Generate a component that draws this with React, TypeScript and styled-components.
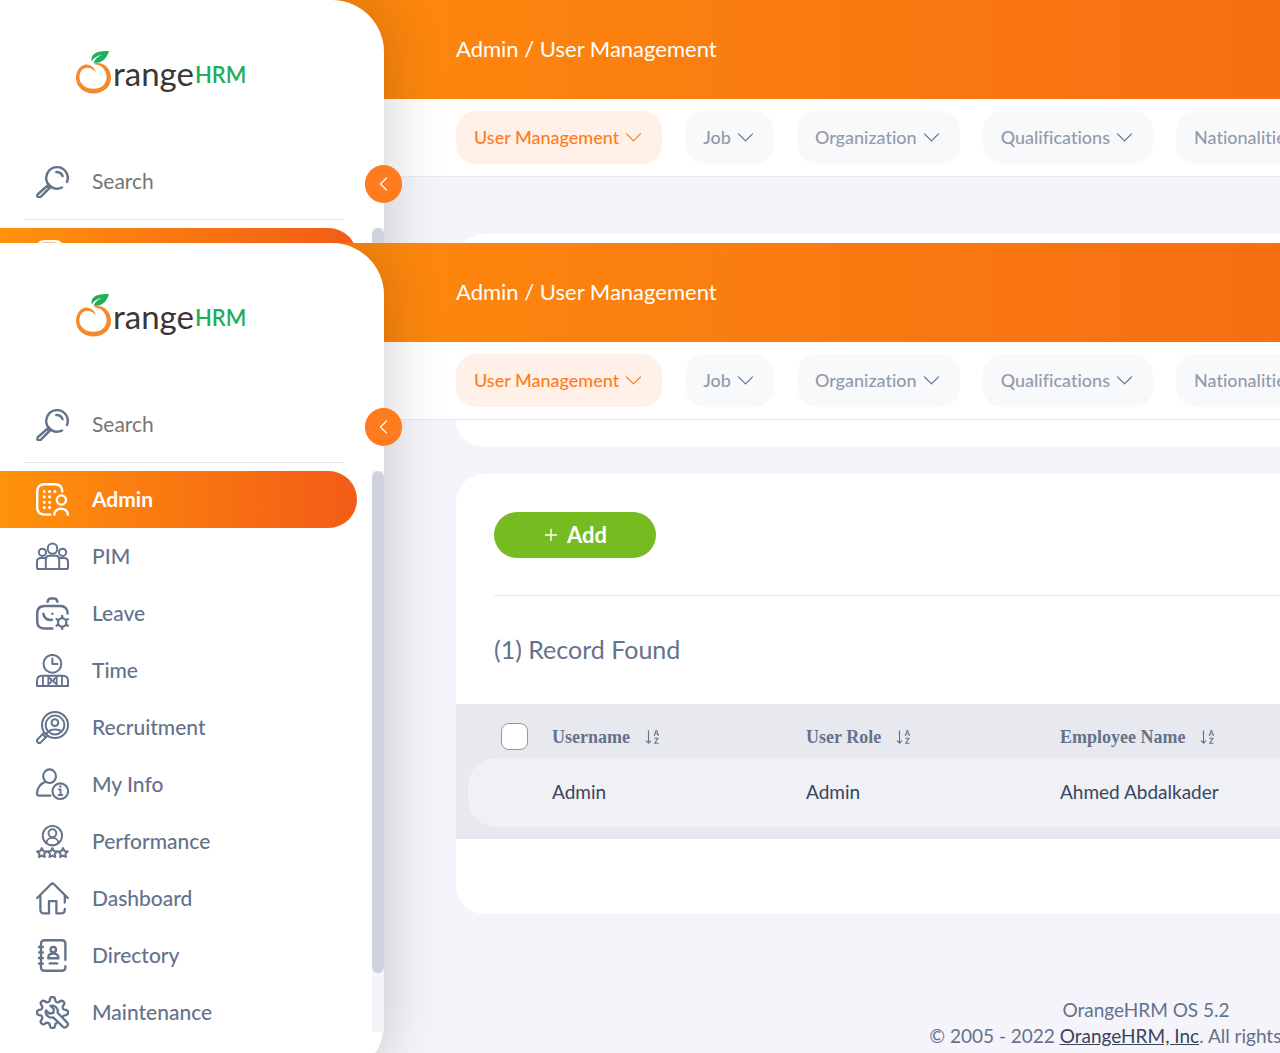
import React, { useId } from "react";
import styled, { createGlobalStyle } from "styled-components";
import { BsSortAlphaDown } from "react-icons/bs";

const sans = `Lato, "Open Sans", sans-serif`;
const color = {
  orange: "#ff7b1d",
  slate: "#64728c",
  ink: "#38455d",
  line: "#e8e9ee",
  canvas: "#f5f4fa",
};

const GlobalStyle = createGlobalStyle`
  *, *::before, *::after { box-sizing: border-box; }
  body { margin: 0; font-family: ${sans}; font-variant-ligatures: no-common-ligatures; color: ${color.slate}; background: ${color.canvas}; overflow: hidden; }
  button, input { font-family: inherit; font-variant-ligatures: inherit; }
`;

const Page = styled.div`
  display: grid;
  grid-template-rows: 243px 1fr;
  height: 100vh;
`;

const Frame = styled.section`
  overflow: hidden;
  min-width: 0;
  min-height: 0;
`;

const Shell = styled.div`
  display: flex;
  min-width: 1908px;
  background: linear-gradient(90deg, #ff920b, #f35c17) 0 0 / 100% 99px no-repeat ${color.canvas};
`;

const Sidebar = styled.aside`
  position: relative;
  z-index: 1;
  flex: 0 0 384px;
  min-width: 0;
  display: flex;
  flex-direction: column;
  padding-bottom: 44px;
  background: #fff;
  border-radius: 0 52px 52px 0;
  box-shadow: 0 0 60px rgba(0, 0, 0, 0.2);
`;

const Brand = styled.a`
  display: flex;
  height: 144px;
  padding: 50px 0 0 75px;
  text-decoration: none;
`;

const BrandText = styled.span<{ $green?: boolean }>`
  margin-top: ${(p) => (p.$green ? 11 : 3)}px;
  padding-left: 1px;
  font-size: ${(p) => (p.$green ? 22 : 33)}px;
  line-height: ${(p) => (p.$green ? 28 : 40)}px;
  font-weight: ${(p) => (p.$green ? 600 : 400)};
  color: ${(p) => (p.$green ? "#1fae5b" : "#3b3638")};
`;

const SearchRow = styled.label`
  display: flex;
  align-items: center;
  gap: 23px;
  height: 76px;
  margin: 0 40px 8px 24px;
  padding-left: 12px;
  border-bottom: 1px solid ${color.line};
`;

const SearchInput = styled.input`
  flex: 1;
  width: 0;
  min-width: 0;
  padding: 0 0 2px;
  border: 0;
  outline: 0;
  background: transparent;
  font-size: 21px;
  line-height: 28px;
  color: ${color.slate};
  &::placeholder { color: #757575; opacity: 1; }
`;

const Collapse = styled.button`
  position: absolute;
  top: 165px;
  right: -18px;
  display: grid;
  place-items: center;
  width: 37px;
  height: 38px;
  padding: 0;
  border: 0;
  border-radius: 19px;
  background: ${color.orange};
  color: #fff;
`;

const MenuArea = styled.nav`
  display: flex;
  height: 561px;
  overflow: hidden;
`;

const MenuList = styled.ul`
  flex: 1;
  margin: 0;
  padding: 0 15px 0 0;
  list-style: none;
`;

const MenuLink = styled.a<{ $active?: boolean }>`
  display: flex;
  align-items: center;
  gap: 23px;
  height: 57px;
  padding-left: 36px;
  border-radius: 0 29px 29px 0;
  font-size: 21px;
  line-height: 28px;
  font-weight: ${(p) => (p.$active ? 700 : 500)};
  color: ${(p) => (p.$active ? "#fff" : color.slate)};
  background: ${(p) => (p.$active ? "linear-gradient(90deg, #ff920b, #f35c17)" : "none")};
  text-decoration: none;
`;

const MenuText = styled.span`
  padding-bottom: 2px;
`;

const ScrollTrack = styled.div`
  flex: 0 0 12px;
  background: ${color.canvas};
`;

const ScrollThumb = styled.div`
  height: 502px;
  border-radius: 6px;
  background: #ced3de;
`;

const Main = styled.main`
  flex: 1;
  display: flex;
  flex-direction: column;
  min-width: 0;
`;

const TitleBar = styled.header`
  display: flex;
  align-items: center;
  height: 99px;
  padding: 0 72px 2px;
`;

const Title = styled.h1`
  margin: 0;
  font-size: 22px;
  line-height: 28px;
  font-weight: 400;
  color: #fff;
`;

const TopNav = styled.nav`
  display: flex;
  gap: 23px;
  padding: 12px 72px;
  border-bottom: 1px solid ${color.line};
  background: #fff;
`;

const Pill = styled.button<{ $active?: boolean }>`
  display: flex;
  align-items: center;
  gap: 6px;
  height: 53px;
  padding: 0 20px 2px 18px;
  border: 0;
  border-radius: 20px;
  font-size: 18px;
  line-height: 24px;
  font-weight: 500;
  white-space: nowrap;
  color: ${(p) => (p.$active ? color.orange : "#929baa")};
  background: ${(p) => (p.$active ? "#fff1e8" : "#f8f9fb")};
  svg { color: ${(p) => (p.$active ? color.orange : color.slate)}; }
`;

const Content = styled.div<{ $scrolled?: boolean }>`
  display: flex;
  flex-direction: column;
  padding: ${(p) => (p.$scrolled ? 0 : 57)}px 72px 0;
`;

const FilterCard = styled.section<{ $scrolled?: boolean }>`
  height: ${(p) => (p.$scrolled ? 27 : 270)}px;
  margin-bottom: 27px;
  border-radius: ${(p) => (p.$scrolled ? "0 0 28px 28px" : "28px")};
  background: #fff;
`;

const Card = styled.section`
  padding: 38px 0 75px;
  border-radius: 28px;
  background: #fff;
`;

const CardTools = styled.div`
  margin: 0 38px;
  padding-bottom: 37px;
  border-bottom: 1px solid ${color.line};
`;

const AddButton = styled.button`
  display: flex;
  align-items: center;
  justify-content: center;
  gap: 8px;
  width: 162px;
  height: 46px;
  border: 0;
  border-radius: 23px;
  background: #76bc21;
  color: #fff;
  font-size: 22px;
  line-height: 28px;
  font-weight: 700;
`;

const Count = styled.p`
  margin: 0;
  padding: 38px 38px 40px;
  font-size: 25px;
  line-height: 30px;
`;

const TableArea = styled.div`
  padding: 0 12px 12px;
  background: ${color.line};
`;

const Table = styled.table`
  width: 100%;
  table-layout: fixed;
  border-collapse: separate;
  border-spacing: 0;
`;

const Column = styled.col<{ $width?: number }>`
  width: ${(p) => (p.$width ? `${p.$width}px` : "auto")};
`;

const Th = styled.th`
  height: 54px;
  padding: 0;
  text-align: left;
  vertical-align: middle;
  font-family: "Liberation Serif", serif;
  font-size: 18px;
  line-height: 24px;
  font-weight: 700;
`;

const CheckTh = styled(Th)`
  padding: 10px 0 0 33px;
`;

const HeadLabel = styled.span`
  display: flex;
  align-items: center;
  gap: 14px;
  padding-top: 11px;
`;

const SortButton = styled.button`
  display: flex;
  padding: 0;
  border: 0;
  background: none;
  color: ${color.slate};
`;

const Check = styled.input`
  appearance: none;
  display: block;
  width: 27px;
  height: 27px;
  margin: 0;
  border: 1px solid #8f99ad;
  border-radius: 8px;
  background: #fff;
`;

const Td = styled.td`
  height: 69px;
  padding: 0 0 2px;
  font-size: 19px;
  line-height: 24px;
  color: ${color.ink};
  background: #f0f1f5;
  &:first-child { border-radius: 28px 0 0 28px; }
  &:last-child { border-radius: 0 28px 28px 0; }
`;

const Footer = styled.footer`
  padding-top: 83px;
  text-align: center;
  font-size: 19px;
  line-height: 26px;
`;

const FooterLine = styled.p`
  margin: 0;
`;

const FooterLink = styled.a`
  color: ${color.ink};
`;

const Glyph = ({ children, w = 2 }: { children: React.ReactNode; w?: number }) => (
  <svg width="33" height="33" viewBox="0 0 33 33" fill="none" stroke="currentColor" strokeWidth={w} strokeLinecap="round" strokeLinejoin="round" aria-hidden="true">
    {children}
  </svg>
);

const star = (cx: number, cy: number) =>
  Array.from({ length: 10 }, (_, i) => {
    const r = i % 2 ? 2.5 : 5;
    const a = (i * Math.PI) / 5 - Math.PI / 2;
    return `${(cx + r * Math.cos(a)).toFixed(2)},${(cy + r * Math.sin(a)).toFixed(2)}`;
  }).join(" ");

const gearSpokes = Array.from({ length: 6 }, (_, i) => {
  const a = (i * Math.PI) / 3 - Math.PI / 2;
  const at = (r: number) => `${(26.2 + r * Math.cos(a)).toFixed(2)} ${(25.4 + r * Math.sin(a)).toFixed(2)}`;
  return `M${at(4.4)}L${at(6.6)}`;
}).join("");

const bigGear = Array.from({ length: 92 }, (_, i) => {
  const a = ((i + 20) * Math.PI * 2) / 104;
  const wave = Math.tanh(Math.cos(8 * a) * 2.2);
  const r = 13.4 + 2.1 * wave;
  return `${(16.5 + r * Math.cos(a)).toFixed(2)},${(16.5 + r * Math.sin(a)).toFixed(2)}`;
}).join(" ");

const SearchIcon = () => (
  <Glyph w={2.4}>
    <path d="M31 17A10.8 10.8 0 1 0 26 22.5M20.3 7C23.5 7 25.7 8.6 26.6 11.2" />
    <path d="M13 19.4L2 29C-.2 31.2 2.8 33.6 5.2 31.4L15 21.4M11.2 21L13.6 23.2" />
  </Glyph>
);

const icons: Record<string, React.ReactNode> = {
  Admin: (
    <Glyph w={2.4}>
      <path d="M26.2 8.6C26.2 4 23.6 1.2 19 1.2H8.4C4 1.2 1.2 4 1.2 8.4V24.4C1.2 28.8 4 31.6 8.4 31.6H14.4" />
      <circle cx="25.4" cy="17" r="4.6" />
      <path d="M18.4 31.8C18.6 23.8 31.6 23.8 31.8 31.8" />
      <path strokeWidth="3" d="M8.2 8.4h.01M13.6 8.4h.01M19 8.4h.01M8.2 13.8h.01M13.6 13.8h.01M8.2 19.2h.01M13.6 19.2h.01M8.2 24.6h.01M13.6 24.6h.01" />
    </Glyph>
  ),
  PIM: (
    <Glyph w={2}>
      <ellipse cx="16.5" cy="8.6" rx="4.8" ry="5.2" />
      <circle cx="6.4" cy="12.3" r="3.6" />
      <circle cx="26.6" cy="12.3" r="3.6" />
      <path d="M9.8 29V19.4C9.8 17 11.2 15.8 13.4 15.8H19.6C21.8 15.8 23.2 17 23.2 19.4V29" />
      <path d="M9.6 18H5C2.4 18 1 19.4 1 22V27.4C1 28.6 1.6 29 2.6 29H30.4C31.4 29 32 28.6 32 27.4V22C32 19.4 30.6 18 28 18H23.4" />
    </Glyph>
  ),
  Leave: (
    <Glyph w={2.5}>
      <path d="M11.6 4.8C12 2.2 13.2 1.4 15 1.4H18C19.8 1.4 21 2.2 21.4 4.8" />
      <path d="M31.6 16.6C31.6 11.8 29 9 24.4 9H8.8C4 9 1.2 11.8 1.2 16.4V24.4C1.2 29 4 31.6 8.8 31.6H16.4" />
      <path d="M7.4 16.8C7.8 21 11.4 23.4 16 22.8M16.4 16.8h.01" />
      <circle cx="26.2" cy="25.4" r="4.2" strokeWidth="2.2" />
      <path d={gearSpokes} strokeWidth="2.2" />
    </Glyph>
  ),
  Time: (
    <Glyph w={2}>
      <circle cx="16.4" cy="9.8" r="8.9" />
      <path d="M16.4 4.4V10H21.6" />
      <path strokeLinecap="butt" d="M1 32V27C1 23.6 2.8 21.8 6 21.8H27C30.2 21.8 32 23.6 32 27V32Z" />
      <path strokeWidth="1.8" d="M7 22V32M12.3 22V32M20.7 22V32M26 22V32M12.6 23.4L15.2 25.2V28L12.6 30M20.4 23.4L17.8 25.2V28L20.4 30M15.2 26.6H17.8" />
    </Glyph>
  ),
  Recruitment: (
    <Glyph w={2}>
      <circle cx="19" cy="14" r="13" />
      <circle cx="19" cy="14" r="9.4" />
      <circle cx="18.9" cy="11.6" r="3.4" />
      <path d="M13.4 20C14.4 18.8 16 18.4 19 18.4S23.6 18.8 24.6 20" />
      <path d="M8.2 21.6L1.6 28.2C-.2 30.4 2.6 33.2 4.8 31.4L11.4 24.8M6.6 23.4L9.8 26.6M9.8 23.2L11.2 21.8" />
    </Glyph>
  ),
  "My Info": (
    <Glyph w={2.1}>
      <ellipse cx="13.6" cy="8.2" rx="6.4" ry="6.8" />
      <path d="M14.4 27.6H2.4C1.4 27.6 1 27.2 1 26.2C1 20.4 4 16 9.4 13.8" />
      <circle cx="24.3" cy="23.2" r="7.8" />
      <path d="M22.8 21.4H24.6V26.8M22.6 27H26.4" strokeWidth="1.8" />
      <path d="M24.3 18.4h.01" strokeWidth="2.4" />
    </Glyph>
  ),
  Performance: (
    <Glyph w={1.9}>
      <circle cx="16.4" cy="10.6" r="9.7" />
      <circle cx="16.4" cy="8.2" r="3.9" />
      <path d="M10.4 18C10.8 11.2 22 11.2 22.4 18" />
      <polygon points={star(5.8, 28)} />
      <polygon points={star(16.4, 28)} />
      <polygon points={star(27, 28)} />
    </Glyph>
  ),
  Dashboard: (
    <Glyph w={2.3}>
      <path d="M1.2 16L15 2.2C16 1.2 17 1.2 18 2.2L31.8 16" />
      <path d="M4.4 14V27.4C4.4 30 5.8 31.4 8.4 31.4H13V19.2H20.4V31.4H25C27.4 31.4 28.8 30 28.8 27.4V27M28.8 14V20.6" />
    </Glyph>
  ),
  Directory: (
    <Glyph w={2.4}>
      <path d="M29.4 20.8V5C29.4 2.6 28 1.2 25.6 1.2H8.8C6.4 1.2 5 2.6 5 5V28C5 30.4 6.4 31.8 8.8 31.8H25.6C28 31.8 29.4 30.4 29.4 28V27.2" />
      <path d="M3 8H6.8M3 13.4H6.8M3 19H6.8M3 24.6H6.8M13.8 24.4H21.2" />
      <circle cx="17.3" cy="10.6" r="2.7" />
      <path d="M12.2 19.2C12.2 15.8 14 14.6 17.3 14.6S22.4 15.8 22.4 19.2Z" />
    </Glyph>
  ),
  Maintenance: (
    <Glyph w={2.3}>
      <polyline points={bigGear} />
      <path d="M14.4 9.8C18.8 8.6 22.6 12.4 21.6 16.8L31 26.4C33.4 29.4 29.6 33 26.8 30.6L17.2 21.4C12.8 22.6 8.8 18.8 10 14.4L13.4 17.6L17.4 16.8L17.8 13Z" />
    </Glyph>
  ),
};

const ChevronDown = () => (
  <svg width="17" height="16" viewBox="0 0 17 16" fill="none" stroke="currentColor" strokeWidth="1.2" strokeLinecap="round" strokeLinejoin="round" aria-hidden="true">
    <path d="M1.5 4.8L8.5 11.8L15.5 4.8" />
  </svg>
);

const Logo = () => (
  <svg width="37" height="45" viewBox="0 0 37 45" aria-hidden="true">
    <path fill="#f58a2c" d="M21 22C19 16.5 13.5 13.5 9 15C4 16.5 1 22 1 28C1 37 9 43.5 18.5 43.5C28.5 43.5 36 36.5 36 28C36 19.5 30.5 13.2 22.5 13C21 13 19.5 13.4 18.5 14C26 14.6 31.2 19.5 31.6 26.5C32 34 26 38.8 18.5 38.8C10.5 38.8 4.2 34 4.4 27C4.6 21.5 8 17.8 12 17.8C15.5 17.8 18.5 19.5 21 22Z" />
    <path fill="#1fae5b" d="M16.8 11.5C15 4 22 .2 34 1C31.5 9 27 13.5 18.5 12.8C20 9 23 6.5 27 4.8C22 6 18.5 8 16.8 11.5Z" />
  </svg>
);

const navItems = ["User Management", "Job", "Organization", "Qualifications"];
const columns = ["Username", "User Role", "Employee Name"];
const records = [["Admin", "Admin", "Ahmed Abdalkader"]];

function Records() {
  return (
    <Card>
      <CardTools>
        <AddButton type="button">
          <svg width="16" height="16" viewBox="0 0 16 16" stroke="currentColor" strokeWidth="1.4" strokeLinecap="round" aria-hidden="true">
            <path d="M8 2.5V13.5M2.5 8H13.5" />
          </svg>
          Add
        </AddButton>
      </CardTools>
      <Count>(1) Record Found</Count>
      <TableArea>
        <Table>
          <colgroup>
            <Column $width={84} />
            <Column $width={254} />
            <Column $width={254} />
            <Column />
          </colgroup>
          <thead>
            <tr>
              <CheckTh>
                <Check type="checkbox" aria-label="Select all" />
              </CheckTh>
              {columns.map((name) => (
                <Th key={name}>
                  <HeadLabel>
                    {name}
                    <SortButton type="button" aria-label={`Sort by ${name}`}>
                      <BsSortAlphaDown size={18} />
                    </SortButton>
                  </HeadLabel>
                </Th>
              ))}
            </tr>
          </thead>
          <tbody>
            {records.map((row) => (
              <tr key={row[2]}>
                <Td />
                {row.map((cell, i) => (
                  <Td key={i}>{cell}</Td>
                ))}
              </tr>
            ))}
          </tbody>
        </Table>
      </TableArea>
    </Card>
  );
}

function AdminScreen({ scrolled = false }: { scrolled?: boolean }) {
  const searchId = useId();
  const menu = scrolled ? Object.keys(icons) : ["Admin"];
  return (
    <Shell>
      <Sidebar>
        <Brand href="#" aria-label="OrangeHRM">
          <Logo />
          <BrandText>range</BrandText>
          <BrandText $green>HRM</BrandText>
        </Brand>
        <SearchRow htmlFor={searchId}>
          <SearchIcon />
          <SearchInput id={searchId} type="text" placeholder="Search" aria-label="Search" />
        </SearchRow>
        <MenuArea>
          <MenuList>
            {menu.map((name) => (
              <li key={name}>
                <MenuLink href="#" $active={name === "Admin"} aria-label={name}>
                  {icons[name]}
                  {scrolled && <MenuText>{name}</MenuText>}
                </MenuLink>
              </li>
            ))}
          </MenuList>
          <ScrollTrack>
            <ScrollThumb />
          </ScrollTrack>
        </MenuArea>
        <Collapse type="button" aria-label="Collapse menu">
          <svg width="16" height="16" viewBox="0 0 16 16" fill="none" stroke="currentColor" strokeWidth="1.3" strokeLinecap="round" strokeLinejoin="round" aria-hidden="true">
            <path d="M10.5 2L4.5 8L10.5 14" />
          </svg>
        </Collapse>
      </Sidebar>
      <Main>
        <TitleBar>
          <Title>Admin / User Management</Title>
        </TitleBar>
        <TopNav>
          {navItems.map((name, i) => (
            <Pill key={name} type="button" $active={i === 0}>
              {name}
              <ChevronDown />
            </Pill>
          ))}
          <Pill type="button">Nationalities</Pill>
        </TopNav>
        <Content $scrolled={scrolled}>
          <FilterCard $scrolled={scrolled} />
          {scrolled && <Records />}
        </Content>
        {scrolled && (
          <Footer>
            <FooterLine>OrangeHRM OS 5.2</FooterLine>
            <FooterLine>
              © 2005 - 2022 <FooterLink href="#">OrangeHRM, Inc</FooterLink>. All rights reserved.
            </FooterLine>
          </Footer>
        )}
      </Main>
    </Shell>
  );
}

export default function App() {
  return (
    <>
      <GlobalStyle />
      <Page>
        <Frame>
          <AdminScreen />
        </Frame>
        <Frame>
          <AdminScreen scrolled />
        </Frame>
      </Page>
    </>
  );
}
